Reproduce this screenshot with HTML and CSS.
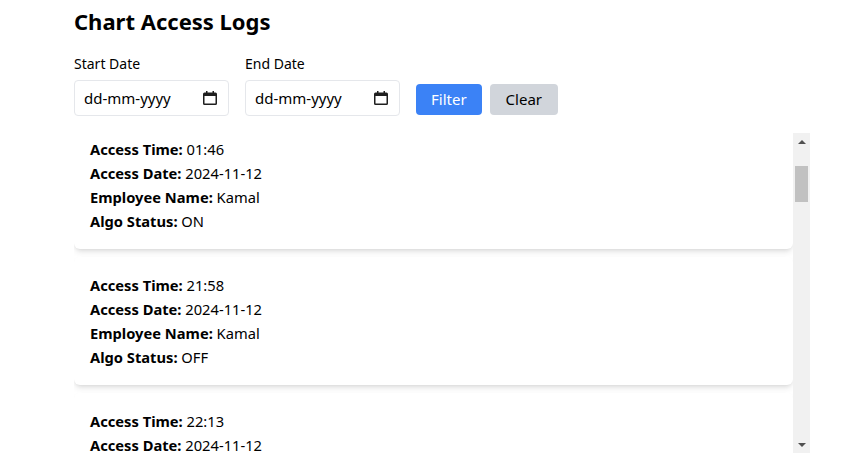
FILE: index.html
```html
<!DOCTYPE html>
<html lang="en">
<head>
<meta charset="utf-8">
<title>Chart Access Logs</title>
<link rel="stylesheet" href="styles.css">
</head>
<body>
<main class="page">
  <h2 class="title">Chart Access Logs</h2>
  <form class="filters">
    <div class="field">
      <label class="label" for="start">Start Date</label>
      <div class="date-input">
        <input id="start" type="text" placeholder="dd-mm-yyyy">
        <svg class="cal" width="14" height="14" viewBox="0 0 14 14"><path fill="#1f1f1f" d="M3 0h1.5v1.5h5V0H11v1.5h1.5A1.5 1.5 0 0 1 14 3v9.5a1.5 1.5 0 0 1-1.5 1.5h-11A1.5 1.5 0 0 1 0 12.5V3a1.5 1.5 0 0 1 1.5-1.5H3zM1.5 5v7.5h11V5z"/></svg>
      </div>
    </div>
    <div class="field">
      <label class="label" for="end">End Date</label>
      <div class="date-input">
        <input id="end" type="text" placeholder="dd-mm-yyyy">
        <svg class="cal" width="14" height="14" viewBox="0 0 14 14"><path fill="#1f1f1f" d="M3 0h1.5v1.5h5V0H11v1.5h1.5A1.5 1.5 0 0 1 14 3v9.5a1.5 1.5 0 0 1-1.5 1.5h-11A1.5 1.5 0 0 1 0 12.5V3a1.5 1.5 0 0 1 1.5-1.5H3zM1.5 5v7.5h11V5z"/></svg>
      </div>
    </div>
    <div class="actions">
      <button type="button" class="btn btn-primary">Filter</button>
      <button type="button" class="btn btn-secondary">Clear</button>
    </div>
  </form>

  <div class="log-panel">
    <div class="log-list" id="logList">
      <div class="card"><p><b>Access Time:</b> 00:12</p><p><b>Access Date:</b> 2024-11-12</p><p><b>Employee Name:</b> Kamal</p><p><b>Algo Status:</b> OFF</p></div>
      <div class="card"><p><b>Access Time:</b> 01:46</p><p><b>Access Date:</b> 2024-11-12</p><p><b>Employee Name:</b> Kamal</p><p><b>Algo Status:</b> ON</p></div>
      <div class="card"><p><b>Access Time:</b> 21:58</p><p><b>Access Date:</b> 2024-11-12</p><p><b>Employee Name:</b> Kamal</p><p><b>Algo Status:</b> OFF</p></div>
      <div class="card"><p><b>Access Time:</b> 22:13</p><p><b>Access Date:</b> 2024-11-12</p><p><b>Employee Name:</b> Kamal</p><p><b>Algo Status:</b> ON</p></div>
      <div class="card"><p><b>Access Time:</b> 09:05</p><p><b>Access Date:</b> 2024-11-13</p><p><b>Employee Name:</b> Kamal</p><p><b>Algo Status:</b> OFF</p></div>
      <div class="card"><p><b>Access Time:</b> 10:21</p><p><b>Access Date:</b> 2024-11-13</p><p><b>Employee Name:</b> Kamal</p><p><b>Algo Status:</b> ON</p></div>
      <div class="card"><p><b>Access Time:</b> 11:40</p><p><b>Access Date:</b> 2024-11-13</p><p><b>Employee Name:</b> Kamal</p><p><b>Algo Status:</b> OFF</p></div>
      <div class="card"><p><b>Access Time:</b> 14:02</p><p><b>Access Date:</b> 2024-11-13</p><p><b>Employee Name:</b> Kamal</p><p><b>Algo Status:</b> ON</p></div>
      <div class="card"><p><b>Access Time:</b> 16:33</p><p><b>Access Date:</b> 2024-11-13</p><p><b>Employee Name:</b> Kamal</p><p><b>Algo Status:</b> OFF</p></div>
      <div class="card"><p><b>Access Time:</b> 08:47</p><p><b>Access Date:</b> 2024-11-14</p><p><b>Employee Name:</b> Kamal</p><p><b>Algo Status:</b> ON</p></div>
      <div class="card"><p><b>Access Time:</b> 10:15</p><p><b>Access Date:</b> 2024-11-14</p><p><b>Employee Name:</b> Kamal</p><p><b>Algo Status:</b> OFF</p></div>
      <div class="card"><p><b>Access Time:</b> 12:58</p><p><b>Access Date:</b> 2024-11-14</p><p><b>Employee Name:</b> Kamal</p><p><b>Algo Status:</b> ON</p></div>
      <div class="card"><p><b>Access Time:</b> 15:20</p><p><b>Access Date:</b> 2024-11-14</p><p><b>Employee Name:</b> Kamal</p><p><b>Algo Status:</b> OFF</p></div>
      <div class="card"><p><b>Access Time:</b> 18:09</p><p><b>Access Date:</b> 2024-11-14</p><p><b>Employee Name:</b> Kamal</p><p><b>Algo Status:</b> ON</p></div>
      <div class="card"><p><b>Access Time:</b> 09:30</p><p><b>Access Date:</b> 2024-11-15</p><p><b>Employee Name:</b> Kamal</p><p><b>Algo Status:</b> OFF</p></div>
      <div class="card"><p><b>Access Time:</b> 11:11</p><p><b>Access Date:</b> 2024-11-15</p><p><b>Employee Name:</b> Kamal</p><p><b>Algo Status:</b> ON</p></div>
      <div class="card"><p><b>Access Time:</b> 13:44</p><p><b>Access Date:</b> 2024-11-15</p><p><b>Employee Name:</b> Kamal</p><p><b>Algo Status:</b> OFF</p></div>
      <div class="card"><p><b>Access Time:</b> 17:26</p><p><b>Access Date:</b> 2024-11-15</p><p><b>Employee Name:</b> Kamal</p><p><b>Algo Status:</b> ON</p></div>
      <div class="card"><p><b>Access Time:</b> 19:52</p><p><b>Access Date:</b> 2024-11-15</p><p><b>Employee Name:</b> Kamal</p><p><b>Algo Status:</b> OFF</p></div>
    </div>
    <div class="scrollbar" aria-hidden="true">
      <div class="sb-btn"><span class="arrow-up"></span></div>
      <div class="sb-track"><div class="sb-thumb"></div></div>
      <div class="sb-btn"><span class="arrow-down"></span></div>
    </div>
  </div>
</main>
<script src="script.js"></script>
</body>
</html>
```

FILE: styles.css
```css
* { box-sizing: border-box; }
html, body { margin: 0; padding: 0; background: #fff; }
body {
  font-family: "Noto Sans", "Open Sans", sans-serif;
  color: #000;
  font-size: 16px;
}
.page {
  width: 736px;
  margin-left: 74px;
  padding-top: 5px;
}
.title {
  margin: 0;
  font-size: 22px;
  line-height: 32px;
  font-weight: 700;
}
.filters {
  display: flex;
  align-items: flex-end;
  gap: 16px;
  margin-top: 17px;
}
.field { display: flex; flex-direction: column; }
.label {
  font-size: 14px;
  line-height: 20px;
  margin-bottom: 6px;
}
.date-input {
  width: 155px;
  height: 36px;
  border: 1px solid #e5e7eb;
  border-radius: 4px;
  display: flex;
  align-items: center;
  padding: 0 11px 0 9px;
}
.date-input input {
  flex: 1;
  min-width: 0;
  border: 0;
  outline: 0;
  padding: 0;
  font: inherit;
  font-size: 15px;
  color: #000;
  background: transparent;
}
.date-input input::placeholder { color: #000; opacity: 1; }
.cal { flex: none; }
.actions { display: flex; gap: 8px; margin-bottom: 1px; }
.btn {
  height: 31px;
  border: 0;
  border-radius: 4px;
  font: inherit;
  font-size: 15px;
  line-height: 20px;
  padding: 0 15px 2px;
  cursor: pointer;
}
.btn-primary { background: #3b82f6; color: #fff; }
.btn-secondary { background: #d1d5db; color: #000; padding-left: 16px; padding-right: 16px; }

.log-panel {
  margin-top: 17px;
  height: 320px;
  display: flex;
}
.log-list {
  flex: 1;
  min-width: 0;
  overflow: hidden;
}
.card {
  background: #fff;
  border-radius: 6px;
  padding: 16px;
  margin-bottom: 8px;
  box-shadow: 0 4px 6px -1px rgba(0,0,0,0.1), 0 2px 4px -2px rgba(0,0,0,0.1);
}
.card p {
  margin: 0;
  font-size: 14.7px;
  line-height: 24px;
}
.scrollbar {
  width: 17px;
  flex: none;
  background: #f1f1f1;
  display: flex;
  flex-direction: column;
}
.sb-btn {
  height: 17px;
  display: flex;
  align-items: center;
  justify-content: center;
}
.arrow-up, .arrow-down {
  width: 0;
  height: 0;
  border-left: 4px solid transparent;
  border-right: 4px solid transparent;
}
.arrow-up { border-bottom: 4px solid #505050; }
.arrow-down { border-top: 4px solid #505050; }
.sb-track { flex: 1; padding: 16px 2px 0; }
.sb-thumb { height: 36px; background: #c1c1c1; }
```

FILE: script.js
```js
document.getElementById('logList').scrollTop = 148;
```
